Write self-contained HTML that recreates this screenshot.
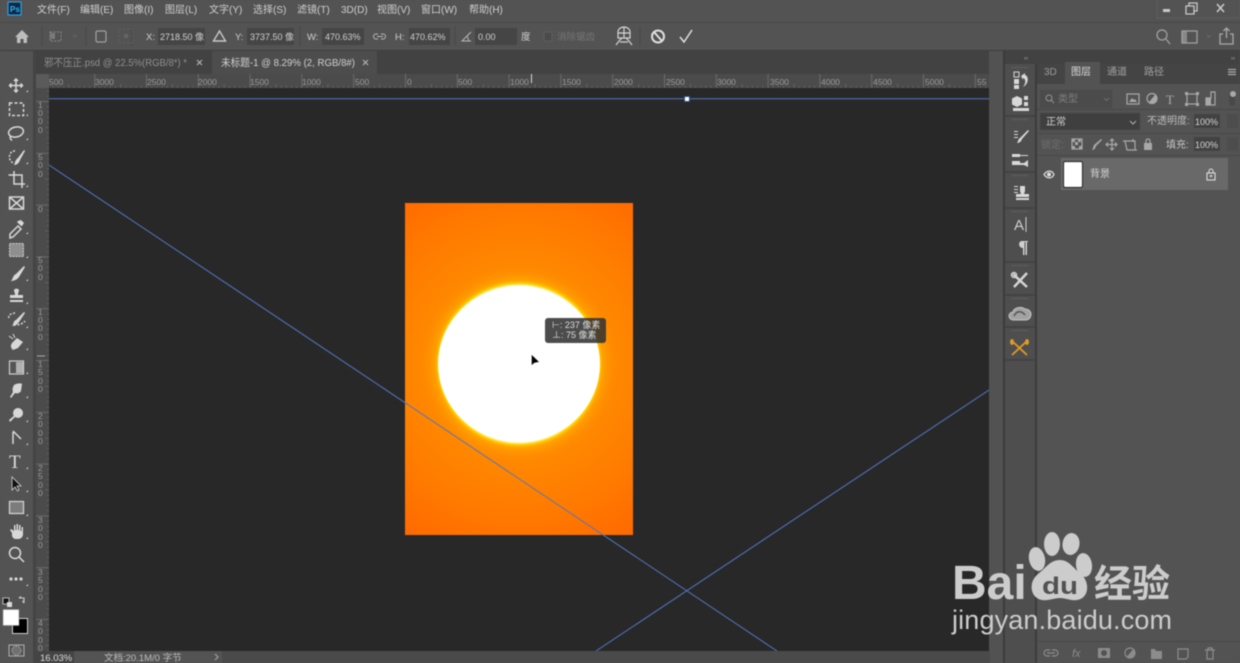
<!DOCTYPE html>
<html><head><meta charset="utf-8">
<style>
html,body{margin:0;padding:0;background:#535353;width:1240px;height:663px;overflow:hidden}
svg{display:block;filter:blur(.4px)}
text{font-family:"Liberation Sans","Noto Sans CJK SC",sans-serif;fill:#c4c4c4;font-size:10px}
.m text{font-size:10px;fill:#cfcfcf}
.o text{font-size:9.5px;fill:#d0d0d0}
.r text{font-size:8.5px;fill:#9a9a9a}
.i{fill:none;stroke:#d8d8d8;stroke-width:1.5}
.f{fill:#d8d8d8;stroke:none}
.p{fill:none;stroke:#a8a8a8;stroke-width:1.2}
.pf{fill:#a8a8a8;stroke:none}
</style></head>
<body>
<svg width="1240" height="663" viewBox="0 0 1240 663" xmlns="http://www.w3.org/2000/svg">
<defs>
<pattern id="hr" x="405" y="74" width="51.8" height="14" patternUnits="userSpaceOnUse">
<path d="M.5 0V14" stroke="#6c6c6c" stroke-width="1" fill="none"/>
<path d="M5.700 12V14M10.900 12V14M16 12V14M21.200 12V14M26.400 10V14M31.600 12V14M36.800 12V14M41.900 12V14M47.100 12V14" stroke="#626262" stroke-width="1" fill="none"/>
</pattern>
<pattern id="vr" x="36" y="101" width="13" height="51.8" patternUnits="userSpaceOnUse">
<path d="M0 .5H13" stroke="#6a6a6a" stroke-width="1" fill="none"/>
<path d="M11 5.700H13M11 10.900H13M11 16H13M11 21.200H13M9 26.400H13M11 31.600H13M11 36.800H13M11 41.900H13M11 47.100H13" stroke="#606060" stroke-width="1" fill="none"/>
</pattern>
<radialGradient id="bg" gradientUnits="userSpaceOnUse" cx="519" cy="364" r="215">
<stop offset="0.37" stop-color="#ff9a00"/><stop offset="0.45" stop-color="#ff8800"/><stop offset="0.7" stop-color="#ff7a00"/><stop offset="1" stop-color="#ff6600"/>
</radialGradient>
<radialGradient id="gl" gradientUnits="userSpaceOnUse" cx="519" cy="364" r="100">
<stop offset="0.78" stop-color="#fff" stop-opacity="1"/><stop offset="0.805" stop-color="#ffdc00" stop-opacity=".9"/><stop offset="0.84" stop-color="#ffaa00" stop-opacity=".55"/><stop offset="0.92" stop-color="#ff9400" stop-opacity=".12"/><stop offset="1" stop-color="#ff9000" stop-opacity="0"/>
</radialGradient>
<clipPath id="hc"><rect x="49" y="74" width="941" height="14"/></clipPath>
<clipPath id="vc"><rect x="36" y="88" width="13" height="563"/></clipPath>
<clipPath id="cc"><rect x="49" y="88" width="940" height="563"/></clipPath>
</defs>

<!-- base -->
<rect width="1240" height="663" fill="#535353"/>
<rect x="0" y="22" width="1240" height="1" fill="#484848"/>
<rect x="0" y="50" width="1240" height="1" fill="#3e3e3e"/>

<!-- menu bar -->
<rect x="8" y="2" width="13" height="13" fill="#0b2a45" stroke="#2f9fe0" stroke-width="1.2"/>
<text x="10" y="12" style="font-size:8px;font-weight:bold;fill:#38b0f0">Ps</text>
<g class="m">
<text x="37" y="13">文件(F)</text><text x="80" y="13">编辑(E)</text><text x="124" y="13">图像(I)</text><text x="165" y="13">图层(L)</text><text x="209" y="13">文字(Y)</text><text x="253" y="13">选择(S)</text><text x="297" y="13">滤镜(T)</text><text x="341" y="13">3D(D)</text><text x="377" y="13">视图(V)</text><text x="421" y="13">窗口(W)</text><text x="469" y="13">帮助(H)</text>
</g>
<rect x="1157" y="-1" width="83" height="19" fill="none" stroke="#5e5e5e"/>
<rect x="1163" y="9" width="7" height="3" fill="#c8c8c8"/>
<path d="M1186 6h8v8h-8zM1189 6V3h8v8h-3" fill="none" stroke="#c8c8c8" stroke-width="1.300"/>
<path d="M1217 4l7 8M1224 4l-7 8" stroke="#c8c8c8" stroke-width="1.600"/>

<!-- options bar -->
<path d="M15 37l7-7 7 7h-2v6h-3.500v-4h-3v4H17v-6z" fill="#bdbdbd"/>
<path d="M42 27V46M86 27V46M132 27V46M300 27V46M455 27V46M640 27V46" stroke="#474747"/>
<path d="M50 32h11v9H50z" fill="none" stroke="#8a8a8a" stroke-dasharray="2 1.500"/><rect x="50" y="33" width="5" height="6" fill="#7a7a7a"/>
<path d="M73 35l2 2 2-2" fill="none" stroke="#666"/>
<rect x="96" y="31" width="10" height="11" rx="1.500" fill="none" stroke="#a0a0a0" stroke-width="1.200"/>
<g fill="#666"><rect x="119" y="29" width="14" height="14" fill="none" stroke="#626262" stroke-dasharray="2 2"/><rect x="124" y="34" width="4" height="4"/></g>
<g class="o">
<rect x="158" y="28" width="47" height="17" fill="#454545"/>
<rect x="247" y="28" width="47" height="17" fill="#454545"/>
<rect x="322" y="28" width="42" height="17" fill="#454545"/>
<rect x="409" y="28" width="41" height="17" fill="#454545"/>
<rect x="475" y="28" width="42" height="17" fill="#454545"/>
<text x="146" y="40">X:</text><text x="160" y="40" style="font-size:9px">2718.50 像</text>
<path d="M219.500 31l-6 10h12z" fill="none" stroke="#c8c8c8" stroke-width="1.400"/>
<text x="235" y="40">Y:</text><text x="250" y="40" style="font-size:9px">3737.50 像</text>
<text x="307" y="40">W:</text><text x="325" y="40" style="font-size:9px">470.63%</text>
<path d="M378 34h-2a2.500 2.500 0 0 0 0 5h2M381 34h2a2.500 2.500 0 0 1 0 5h-2M377 36.500h6" fill="none" stroke="#b8b8b8"/>
<text x="395" y="40">H:</text><text x="410" y="40" style="font-size:9px">470.62%</text>
<path d="M471 32l-9 9h9M467 36l2 5" fill="none" stroke="#b8b8b8"/>
<text x="478" y="40" style="font-size:9px">0.00</text>
<text x="521" y="40">度</text>
<rect x="544" y="32" width="8" height="9" fill="#4b4b4b" stroke="#5c5c5c"/>
<text x="557" y="40" style="fill:#767676">消除锯齿</text>
</g>
<g fill="none" stroke="#d4d4d4" stroke-width="1.200">
<path d="M618 38v-6a6 5 0 0 1 12 0v6zM618 33h12M624 27v11"/>
<path d="M622 38l-3 3-3 4M626 38l3 3 3 4M620 42h8"/>
</g>
<circle cx="658" cy="36.500" r="6" fill="none" stroke="#dedede" stroke-width="2"/><path d="M654 32l8 9" stroke="#dedede" stroke-width="2"/>
<path d="M680 37l4 5 8-12" fill="none" stroke="#e0e0e0" stroke-width="1.500"/>
<circle cx="1162" cy="35" r="5" fill="none" stroke="#a0a0a0" stroke-width="1.300"/><path d="M1166 39l4 5" stroke="#a0a0a0" stroke-width="1.300"/>
<rect x="1182" y="31" width="15" height="12" fill="none" stroke="#a0a0a0" stroke-width="1.300"/><rect x="1182" y="31" width="5" height="12" fill="#a0a0a0" opacity=".7"/>
<path d="M1207 35l2 2 2-2" fill="none" stroke="#6c6c6c"/>
<path d="M1223 34h-3v10h13V34h-3M1226.500 38V28M1223.500 31l3-3 3 3" fill="none" stroke="#a8a8a8" stroke-width="1.300"/>

<!-- tab bar -->
<rect x="34" y="51" width="956" height="23" fill="#424242"/>
<rect x="212" y="51" width="165" height="23" fill="#4d4d4d"/>
<text x="44" y="66" style="fill:#8f8f8f;font-size:10.5px" textLength="143" lengthAdjust="spacingAndGlyphs">邪不压正.psd @ 22.5%(RGB/8*) *</text>
<path d="M197 60l5 5M202 60l-5 5" stroke="#b0b0b0" stroke-width="1.200"/>
<text x="221" y="66" style="fill:#d0d0d0;font-size:10.5px" textLength="134" lengthAdjust="spacingAndGlyphs">未标题-1 @ 8.29% (2, RGB/8#)</text>
<path d="M363 60l5 5M368 60l-5 5" stroke="#b0b0b0" stroke-width="1.200"/>

<!-- rulers -->
<rect x="33" y="51" width="3" height="612" fill="#444"/>
<rect x="36" y="74" width="954" height="14" fill="#4b4b4b"/>
<rect x="36" y="74" width="13" height="14" fill="#5a5a5a"/>
<rect x="36" y="88" width="13" height="563" fill="#4b4b4b"/>
<g clip-path="url(#hc)"><rect x="49" y="74" width="941" height="14" fill="url(#hr)"/></g>
<g clip-path="url(#vc)"><rect x="36" y="88" width="13" height="563" fill="url(#vr)"/></g>
<g class="r">
<text x="49" y="85">500</text><text x="95" y="85">3000</text><text x="147" y="85">2500</text><text x="198" y="85">2000</text><text x="250" y="85">1500</text><text x="302" y="85">1000</text><text x="355" y="85">500</text><text x="407" y="85">0</text><text x="458" y="85">500</text><text x="510" y="85">1000</text><text x="562" y="85">1500</text><text x="614" y="85">2000</text><text x="666" y="85">2500</text><text x="717" y="85">3000</text><text x="770" y="85">3500</text><text x="821" y="85">4000</text><text x="873" y="85">4500</text><text x="925" y="85">5000</text><text x="977" y="85">55</text>
<g style="fill:#8a8a8a">
<text x="38" y="108">1</text><text x="38" y="116">0</text><text x="38" y="124">0</text><text x="38" y="133">0</text>
<text x="38" y="160">5</text><text x="38" y="168">0</text><text x="38" y="177">0</text>
<text x="38" y="212">0</text>
<text x="38" y="263">5</text><text x="38" y="271">0</text><text x="38" y="280">0</text>
<text x="38" y="315">1</text><text x="38" y="323">0</text><text x="38" y="331">0</text><text x="38" y="340">0</text>
<text x="38" y="367">1</text><text x="38" y="375">5</text><text x="38" y="384">0</text><text x="38" y="392">0</text>
<text x="38" y="419">2</text><text x="38" y="427">0</text><text x="38" y="436">0</text><text x="38" y="444">0</text>
<text x="38" y="471">2</text><text x="38" y="479">5</text><text x="38" y="488">0</text><text x="38" y="496">0</text>
<text x="38" y="523">3</text><text x="38" y="531">0</text><text x="38" y="540">0</text><text x="38" y="548">0</text>
<text x="38" y="575">3</text><text x="38" y="583">5</text><text x="38" y="592">0</text><text x="38" y="600">0</text>
<text x="38" y="626">4</text><text x="38" y="634">0</text><text x="38" y="643">0</text><text x="38" y="651">0</text>
</g></g>
<path d="M37 356h8" stroke="#a8a8a8"/>
<path d="M531.500 74v9" stroke="#d8d8d8"/>

<!-- canvas -->
<rect x="49" y="88" width="940" height="563" fill="#282828"/>
<rect x="405" y="203" width="228" height="332" fill="url(#bg)"/>
<ellipse cx="519" cy="364" rx="103" ry="100" fill="url(#gl)"/>
<ellipse cx="519" cy="364" rx="81" ry="78" fill="#fff"/>
<g clip-path="url(#cc)" stroke="#5277c0" stroke-width="1" fill="none">
<path d="M49 98.800H989"/>
<path d="M49 165L777 651"/>
<path d="M596 651L989 390"/>
</g>
<rect x="684.500" y="96.500" width="5" height="5" fill="#fff" stroke="#31508c"/>

<!-- tooltip -->
<rect x="545" y="318" width="61" height="25" rx="3" fill="#333" opacity=".88"/>
<text x="552" y="328" style="font-size:9px;fill:#ddd">⊢: 237 像素</text>
<text x="552" y="338" style="font-size:9px;fill:#ddd">⊥:  75 像素</text>
<path d="M531.500 354.500v11l2.800-2.500 5-1z" fill="#000" stroke="#fff" stroke-width=".4"/>

<!-- right of canvas -->
<rect x="989" y="51" width="14" height="612" fill="#525252"/>
<rect x="1003" y="51" width="237" height="13" fill="#424242"/>
<rect x="1005" y="64" width="30" height="599" fill="#4e4e4e"/>
<rect x="1003" y="51" width="2" height="612" fill="#3b3b3b"/>
<rect x="1035" y="64" width="2" height="599" fill="#3b3b3b"/>
<text x="1024" y="60" style="font-size:6px;fill:#aaa">‹‹</text>
<text x="1231" y="60" style="font-size:6px;fill:#aaa">››</text>

<!-- dock icons -->
<path d="M1005 116h30M1005 172h30M1005 208h30M1005 262h30M1005 295h30M1005 327h30M1005 360h30" stroke="#404040" stroke-width="1.500"/>
<path d="M1012 67.500h16M1012 119.500h16M1012 175.500h16M1012 211.500h16M1012 265.500h16M1012 298.500h16M1012 330.500h16" stroke="#666" stroke-dasharray="2 1"/>
<g class="f">
<rect x="1014" y="72" width="5" height="5" fill="none" stroke="#d8d8d8"/><rect x="1014" y="79" width="5" height="5"/><rect x="1014" y="85" width="5" height="4"/>
<path d="M1021 76l4-3v2c4 1 4 9-2 12 3-4 3-8 0-9v2z"/>
<path d="M1017 96l5 2.500v6l-5 2.500-5-2.500v-6z"/><rect x="1024" y="96" width="4" height="4"/><rect x="1024" y="102" width="4" height="4"/><rect x="1013" y="108" width="16" height="3"/>
<path d="M1014 131h4v1h-4zM1014 134h4v1h-4zM1014 137h4v1h-4zM1028 130l1 1-7 8c-1 3-3 4-5 4 1-1 1-4 3-5z"/>
<path d="M1012 154h8v1h8v1h-8v1h-8zM1012 161h8v2h4l4-3v7l-4-2h-12z"/>
<path d="M1014 186h4v1h-4zM1014 189h4v1h-4zM1014 192h4v1h-4zM1020 186h5v5l-1 3h5v3h-13v-3h5l-1-3z"/><rect x="1016" y="198" width="13" height="2"/>
</g>
<text x="1014" y="230" style="font-size:15px;fill:#d0d0d0">A</text><path d="M1026 217v15" stroke="#d0d0d0"/>
<path d="M1022 241h6v1h-1v13h-1.500v-13h-1v13H1023v-7c-5 0-5-7-1-7z" fill="#d0d0d0"/>
<path d="M1013 274l14 13M1027 273l-13 14" stroke="#d4d4d4" stroke-width="2.500"/><circle cx="1014" cy="275" r="2.500" fill="none" stroke="#d4d4d4" stroke-width="1.500"/>
<path d="M1013 320a4 4 0 0 1 0-8 7 5 0 0 1 12-3 5 5 0 0 1 1 11z" fill="#a2a2a2" stroke="#c4c4c4"/><path d="M1014 316c3-6 8-5 11-1" fill="none" stroke="#555" stroke-width="1.500"/>
<path d="M1012 341l15 14M1027 341l-15 14" stroke="#e09a26" stroke-width="1.800"/><ellipse cx="1012" cy="342" rx="2" ry="3" fill="#e09a26"/><ellipse cx="1027" cy="342" rx="2" ry="3" fill="#e09a26"/>

<!-- layers panel -->
<rect x="1037" y="64" width="203" height="20" fill="#444"/>
<rect x="1065" y="62" width="35" height="22" fill="#535353"/>
<rect x="1037" y="84" width="203" height="558" fill="#535353"/>
<text x="1044" y="75" style="fill:#9a9a9a">3D</text>
<text x="1071" y="75" style="fill:#dcdcdc">图层</text>
<text x="1107" y="75" style="fill:#a0a0a0">通道</text>
<text x="1144" y="75" style="fill:#a0a0a0">路径</text>
<path d="M1228 69.500h8M1228 72h8M1228 74.500h8" stroke="#a8a8a8" stroke-width="1.200"/>
<path d="M1037 109.500H1240M1037 133.500H1240M1037 155.500H1240" stroke="#484848"/>

<rect x="1040" y="90" width="72" height="18" fill="#4b4b4b" stroke="#4e4e4e"/>
<circle cx="1049" cy="98" r="3" fill="none" stroke="#939393"/><path d="M1051 100l3 3" stroke="#939393"/>
<text x="1058" y="102" style="fill:#7e7e7e">类型</text>
<path d="M1104 98l2.500 2.500 2.500-2.500" fill="none" stroke="#6e6e6e"/>
<rect x="1127" y="94" width="12" height="10" class="p"/><path d="M1129 102l3-4 2 2 1-1 2 3z" class="pf"/>
<circle cx="1152" cy="98.500" r="5" class="p"/><path d="M1152 103.500a5 5 0 0 0 0-10z" class="pf" transform="rotate(40 1152 98.500)"/>
<text x="1166" y="104" style="font-size:13px;font-family:'Liberation Serif',serif;fill:#a8a8a8">T</text>
<rect x="1187" y="94" width="10" height="10" class="p"/><path d="M1185 92h3v3h-3zM1196 92h3v3h-3zM1185 103h3v3h-3zM1196 103h3v3h-3z" class="pf"/>
<path d="M1211 92h4v13h-9v-7h5z" class="p"/><rect x="1206" y="98" width="5" height="7" class="pf"/>
<rect x="1229" y="92" width="6" height="14" rx="3" fill="#494949"/><circle cx="1233" cy="94" r="3" fill="#a8a8a8"/>

<rect x="1040" y="113" width="100" height="17" fill="#3f3f3f" stroke="#4a4a4a"/>
<text x="1046" y="125" style="fill:#d0d0d0">正常</text>
<path d="M1130 121l3 3 3-3" fill="none" stroke="#b0b0b0"/>
<text x="1147" y="124" style="fill:#bdbdbd">不透明度:</text>
<rect x="1194" y="114" width="26" height="14" fill="#424242"/>
<text x="1195" y="125" style="font-size:9px;fill:#d4d4d4">100%</text>
<rect x="1227" y="114" width="11" height="14" fill="#4d4d4d"/>

<text x="1041" y="148" style="fill:#6f6f6f">锁定:</text>
<rect x="1072" y="139" width="10" height="10" class="p"/><path d="M1072 139h3v3h-3zM1078 139h3v3h-3zM1075 142h3v3h-3zM1072 146h3v3h-3zM1079 146h3v3h-3z" class="pf"/>
<path d="M1101 139l1 1-6 6c-1 3-2 4-4 4 1-1 1-3 2-5z" class="pf"/>
<path d="M1112 139v11M1106 144.500h11M1110 141l2-2 2 2M1110 148l2 2 2-2M1108 142.500l-2 2 2 2M1115 142.500l2 2-2 2" class="p"/>
<path d="M1125 141h10v9h-8zM1123 141h4M1133 139v3M1135 150h2" class="p"/>
<rect x="1144" y="143" width="8" height="7" class="pf"/><path d="M1146 143v-2a2 2 0 0 1 4 0v2" class="p"/>
<text x="1166" y="148" style="fill:#c4c4c4">填充:</text>
<rect x="1194" y="137" width="26" height="14" fill="#424242"/>
<text x="1195" y="148" style="font-size:9px;fill:#d4d4d4">100%</text>
<rect x="1227" y="137" width="11" height="14" fill="#4d4d4d"/>

<rect x="1061" y="158" width="167" height="32" fill="#696969"/>
<path d="M1044 174.500c3-4.500 8-4.500 10 0-2 4.500-7 4.500-10 0z" fill="none" stroke="#e0e0e0" stroke-width="1.200"/><circle cx="1049" cy="174.500" r="2" fill="#e0e0e0"/>
<rect x="1063.500" y="161.500" width="19" height="26" rx="1.500" fill="#fff" stroke="#333" stroke-width="1.200"/>
<text x="1090" y="177" style="fill:#d8d8d8">背景</text>
<rect x="1207" y="173" width="8" height="7" fill="none" stroke="#dcdcdc" stroke-width="1.100"/><path d="M1209 173v-2a2 2 0 0 1 4 0v2" fill="none" stroke="#dcdcdc"/><rect x="1210" y="175" width="2" height="2" fill="#dcdcdc"/>

<rect x="1037" y="642" width="203" height="21" fill="#535353"/>
<path d="M1037 641.500H1240" stroke="#484848"/>
<g stroke="#8c8c8c" fill="none" stroke-width="1.200">
<path d="M1050 650h-3a3 3 0 0 0 0 6h3M1052 650h3a3 3 0 0 1 0 6h-3M1047 653h8"/>
<path d="M1125 653a5 5 0 1 0 10 0a5 5 0 1 0-10 0"/>
<path d="M1178 649h10v8l-2 2h-8z"/>
<path d="M1205 650h10M1207 650v9h6v-9M1208 650v-2h4v2"/>
</g>
<text x="1072" y="657" style="font-size:11px;font-style:italic;fill:#8c8c8c">fx</text>
<path d="M1098 648h12v10h-12z" fill="#8c8c8c"/><circle cx="1104" cy="653" r="3" fill="#535353"/>
<path d="M1130 648a5 5 0 0 1 0 10z" fill="#8c8c8c" transform="rotate(40 1130 653)"/>
<path d="M1151 649h4l1 2h6v8h-11z" fill="#8c8c8c"/>

<!-- status bar -->
<rect x="36" y="651" width="38" height="12" fill="#444"/>
<rect x="74" y="651" width="148" height="12" fill="#535353"/>
<rect x="222" y="651" width="768" height="12" fill="#4a4a4a"/>
<text x="40" y="661" style="font-size:9.500px;fill:#dcdcdc">16.03%</text>
<text x="104" y="661" style="font-size:9.500px;fill:#bdbdbd">文档:20.1M/0 字节</text>
<path d="M215 654l3 3-3 3" fill="none" stroke="#a8a8a8"/>

<!-- toolbar icons -->
<g class="i">
<path d="M16 79V92M9.500 85.500H22.500M14 81l2-2 2 2M14 90l2 2 2-2M11.500 83.500l-2 2 2 2M20.500 83.500l2 2-2 2"/>
<rect x="9.500" y="103" width="14" height="12.500" stroke-dasharray="3 2"/>
<ellipse cx="16" cy="132" rx="7.500" ry="5" transform="rotate(-12 16 132)"/><path d="M11 136c-2 2 0 3.500 1 4.500" />
<path d="M15 151a5 6 0 1 0-1 12" stroke-dasharray="2 1.500"/>
<path d="M14 171v13h11M8.500 175H22v13"/>
<rect x="9.500" y="197" width="14" height="12"/><path d="M9.500 197l14 12M23.500 197l-14 12"/>
<path d="M10 234l8-8 3 3-8 8-3 1z"/>
<path d="M15 313a7 4 0 0 0-6 5M14 325c4 0 9-1 11-4" stroke-dasharray="2 1.500"/>
<path d="M13 432v12M13 431l8 8"/>
<circle cx="15" cy="553" r="5.500"/><path d="M19 557l5 5"/>
</g>
<g class="f">
<path d="M24 150l1 1-5 9c-1 3-3 5-6 5 1-2 1-5 4-7z"/>
<path d="M21 220l2 2 1 1-2 3-1 0-4-4 1-1z"/>
<rect x="9.500" y="243.500" width="14" height="13" fill="#8f8f8f" stroke="#cfcfcf" stroke-dasharray="2 1"/>
<path d="M24 266l1 1-6 10c-2 3-6 4-8 4 2-2 2-6 5-7z"/>
<path d="M14 290a3 3 0 0 1 5 0c0 2-1 2-1 5h5v3H10v-3h5c0-3-1-3-1-5zM10 300h13v2H10z"/>
<path d="M24 312l1 1-6 9c-2 3-5 4-7 4 2-2 1-5 4-6z"/>
<path d="M17 338l6 4-5 6-5 2c-2-2-3-4-1-7z"/>
<path d="M9 336l4 3M13 334l2 4" stroke="#d8d8d8" fill="none"/>
<path d="M14 385c3-2 7-2 8-1l-1 7c-1 2-4 3-6 2l-4 5-1-1 3-5c-1-3 0-5 1-7z"/>
<circle cx="18" cy="413" r="5"/><path d="M9 420l7-6 1 1-7 7z"/>
<path d="M12 477v13l3-3 2.500 4 1.500-1-2-4h4z" stroke="#d8d8d8" stroke-width=".8" fill="#111"/>
<rect x="9.500" y="501.500" width="14" height="12" fill="#7c7c7c" stroke="#d0d0d0" stroke-width="1.300"/>
<path d="M12 533l-2-3 1-1 3 2v-6h1.500v5h1v-6H18v6h1v-5h1.500v6h1v-4H23v7c0 3-2 5-5 5h-2c-2 0-3-1-4-3z"/>
<circle cx="11" cy="579" r="1.600"/><circle cx="16" cy="579" r="1.600"/><circle cx="21" cy="579" r="1.600"/>
</g>
<rect x="9.500" y="361" width="14" height="13" fill="#555" stroke="#cfcfcf" stroke-width="1.200"/><rect x="16" y="362" width="7" height="11" fill="#c8c8c8" opacity=".8"/>
<text x="9" y="468" style="font-size:19px;font-family:'Liberation Serif',serif;fill:#dcdcdc">T</text>
<g fill="#d8d8d8"><path d="M26 92h2v-2zM26 116h2v-2zM26 140h2v-2zM26 164h2v-2zM26 187h2v-2zM26 234h2v-2zM26 258h2v-2zM26 281h2v-2zM26 304h2v-2zM26 328h2v-2zM26 350h2v-2zM26 374h2v-2zM26 398h2v-2zM26 422h2v-2zM26 445h2v-2zM26 469h2v-2zM26 492h2v-2zM26 516h2v-2zM26 539h2v-2zM26 586h2v-2z"/></g>

<!-- colors -->
<rect x="3" y="598" width="6" height="6" fill="#111" stroke="#ddd" stroke-width=".8"/><rect x="7" y="602" width="5" height="5" fill="#ddd"/>
<path d="M19 598h5v5M19 598l2-1.500M24 603l-1.500-2" fill="none" stroke="#ccc" stroke-width="1.100"/>
<rect x="12.500" y="618.500" width="15" height="15" fill="#000" stroke="#d0d0d0"/>
<rect x="3" y="609.500" width="16" height="16" fill="#fff" stroke="#888" stroke-width=".6"/>
<rect x="9" y="645" width="15" height="11" fill="none" stroke="#b0b0b0"/><circle cx="16.500" cy="650.500" r="4.500" fill="#707070" stroke="#aaa" stroke-dasharray="1.500 1"/>

<!-- watermark -->
<g>
<text x="952" y="599" style="font-size:48px;font-weight:bold;fill:#cccccc">Bai</text>
<ellipse cx="1037" cy="559" rx="8" ry="12" fill="#cccccc" transform="rotate(-12 1037 559)"/>
<ellipse cx="1052" cy="544" rx="8" ry="12" fill="#cccccc"/>
<ellipse cx="1071" cy="544" rx="8.500" ry="11" fill="#cccccc" transform="rotate(8 1071 544)"/>
<ellipse cx="1084" cy="565" rx="8" ry="12" fill="#cccccc" transform="rotate(-8 1084 565)"/>
<path d="M1060 560c9 0 13 8 20 13 10 8 10 25-3 27-6 1-11-2-17-2s-12 3-18 2c-12-2-14-18-4-26 8-6 12-14 22-14z" fill="#cccccc"/>
<text x="1042" y="594" style="font-size:24px;font-weight:bold;fill:#525252" textLength="36" lengthAdjust="spacingAndGlyphs">du</text>
<text x="1094" y="597" style="font-size:38px;font-weight:bold;fill:#cccccc" textLength="76">经验</text>
<text x="952" y="629" style="font-size:27px;fill:#cccccc" textLength="220">jingyan.baidu.com</text>
</g>
</svg>
</body></html>
